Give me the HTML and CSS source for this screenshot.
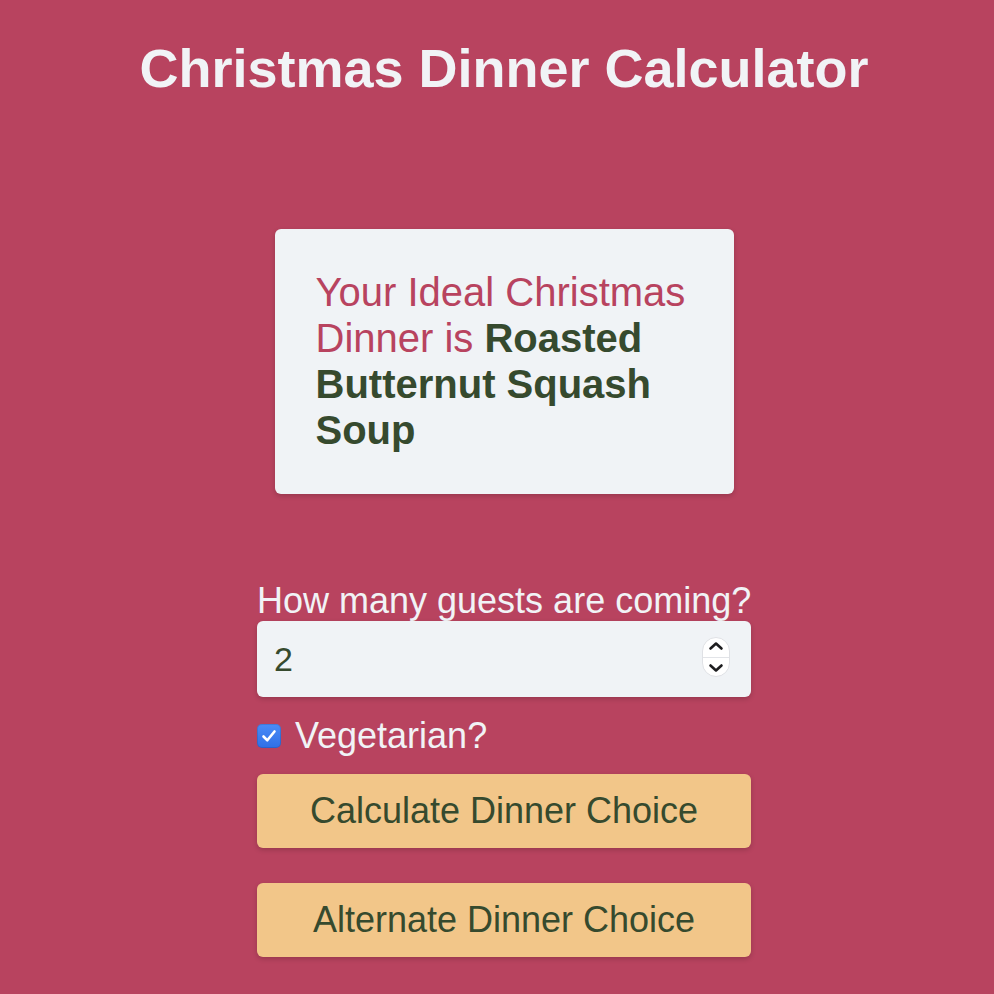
FILE: index.html
```html
<!DOCTYPE html>
<html lang="en">
<head>
<meta charset="utf-8">
<title>Christmas Dinner Calculator</title>
<link rel="stylesheet" href="styles.css">
</head>
<body>
<main class="page">
  <h1 class="title">Christmas Dinner Calculator</h1>
  <section class="card">
    <p class="result">Your Ideal Christmas Dinner is <strong class="dish">Roasted Butternut Squash Soup</strong></p>
  </section>
  <form class="form">
    <label class="label" for="guests">How many guests are coming?</label>
    <div class="number-wrap">
      <input class="number" id="guests" type="number" value="2">
      <span class="stepper">
        <svg width="28" height="40" viewBox="0 0 28 40">
          <rect x="0.5" y="0.5" width="27" height="39" rx="13.5" fill="#ffffff" stroke="#dfe1e5"/>
          <line x1="1" y1="20.5" x2="27" y2="20.5" stroke="#e2e4e8"/>
          <path d="M8.5 11.5 L14 6.5 L19.5 11.5" fill="none" stroke="#1d1d1f" stroke-width="2.6" stroke-linecap="round" stroke-linejoin="round"/>
          <path d="M8.5 28.5 L14 33.5 L19.5 28.5" fill="none" stroke="#1d1d1f" stroke-width="2.6" stroke-linecap="round" stroke-linejoin="round"/>
        </svg>
      </span>
    </div>
    <label class="check-row">
      <input class="check-input" type="checkbox" checked>
      <span class="check-box">
        <svg width="18" height="18" viewBox="0 0 18 18"><path d="M3.5 9.5 L7.3 13.3 L14.5 4.5" fill="none" stroke="#ffffff" stroke-width="2.6" stroke-linecap="round" stroke-linejoin="round"/></svg>
      </span>
      <span class="check-text">Vegetarian?</span>
    </label>
    <button class="btn" type="button">Calculate Dinner Choice</button>
    <button class="btn btn-alt" type="button">Alternate Dinner Choice</button>
  </form>
</main>
</body>
</html>
```
FILE: styles.css
```css
* { box-sizing: border-box; }
html, body { margin: 0; padding: 0; }
body {
  background: #b8435f;
  font-family: "Liberation Sans", Arial, Helvetica, sans-serif;
  min-height: 994px;
}
.page {
  display: flex;
  flex-direction: column;
  align-items: center;
  padding-left: 14px;
}
.title {
  margin: 37px 0 0;
  font-size: 54px;
  line-height: 62px;
  font-weight: 700;
  color: #f1f3f6;
}
.card {
  margin-top: 130px;
  width: 459px;
  padding: 40px 41px 41px;
  background: #f0f3f6;
  border-radius: 6px;
  box-shadow: 0 2px 5px rgba(0, 0, 0, 0.18);
}
.result {
  margin: 0;
  font-size: 40px;
  line-height: 46px;
  color: #b8435f;
}
.dish {
  font-weight: 700;
  color: #364a2e;
}
.form {
  margin-top: 86px;
  width: 494px;
  display: flex;
  flex-direction: column;
}
.label {
  font-size: 36px;
  line-height: 41px;
  color: #f1f3f6;
  white-space: nowrap;
}
.number-wrap {
  position: relative;
}
.number {
  display: block;
  width: 100%;
  height: 76px;
  border: none;
  border-radius: 6px;
  background: #f0f3f6;
  padding: 0 17px;
  font-family: inherit;
  font-size: 34px;
  color: #364a2e;
  box-shadow: 0 2px 5px rgba(0, 0, 0, 0.18);
  outline: none;
  -moz-appearance: textfield;
}
.number::-webkit-inner-spin-button,
.number::-webkit-outer-spin-button {
  -webkit-appearance: none;
  margin: 0;
}
.stepper {
  position: absolute;
  right: 21px;
  top: 16px;
  width: 28px;
  height: 40px;
  display: block;
}
.stepper svg { display: block; }
.check-row {
  margin: 18px 0;
  display: flex;
  align-items: center;
  gap: 14px;
}
.check-input {
  position: absolute;
  opacity: 0;
  width: 0;
  height: 0;
  margin: 0;
}
.check-box {
  width: 24px;
  height: 24px;
  border-radius: 5px;
  background: linear-gradient(#4a8cf7, #2f6fe6);
  display: flex;
  align-items: center;
  justify-content: center;
  box-shadow: inset 0 0 0 1px rgba(0, 0, 0, 0.12);
}
.check-box svg { display: block; }
.check-text {
  font-size: 36px;
  line-height: 41px;
  color: #f1f3f6;
}
.btn {
  display: block;
  height: 74px;
  width: 100%;
  border: none;
  border-radius: 6px;
  background: #f2c689;
  color: #364a2e;
  font-family: inherit;
  font-size: 36px;
  box-shadow: 0 2px 5px rgba(0, 0, 0, 0.18);
  padding: 0;
}
.btn-alt {
  margin-top: 35px;
}
```
